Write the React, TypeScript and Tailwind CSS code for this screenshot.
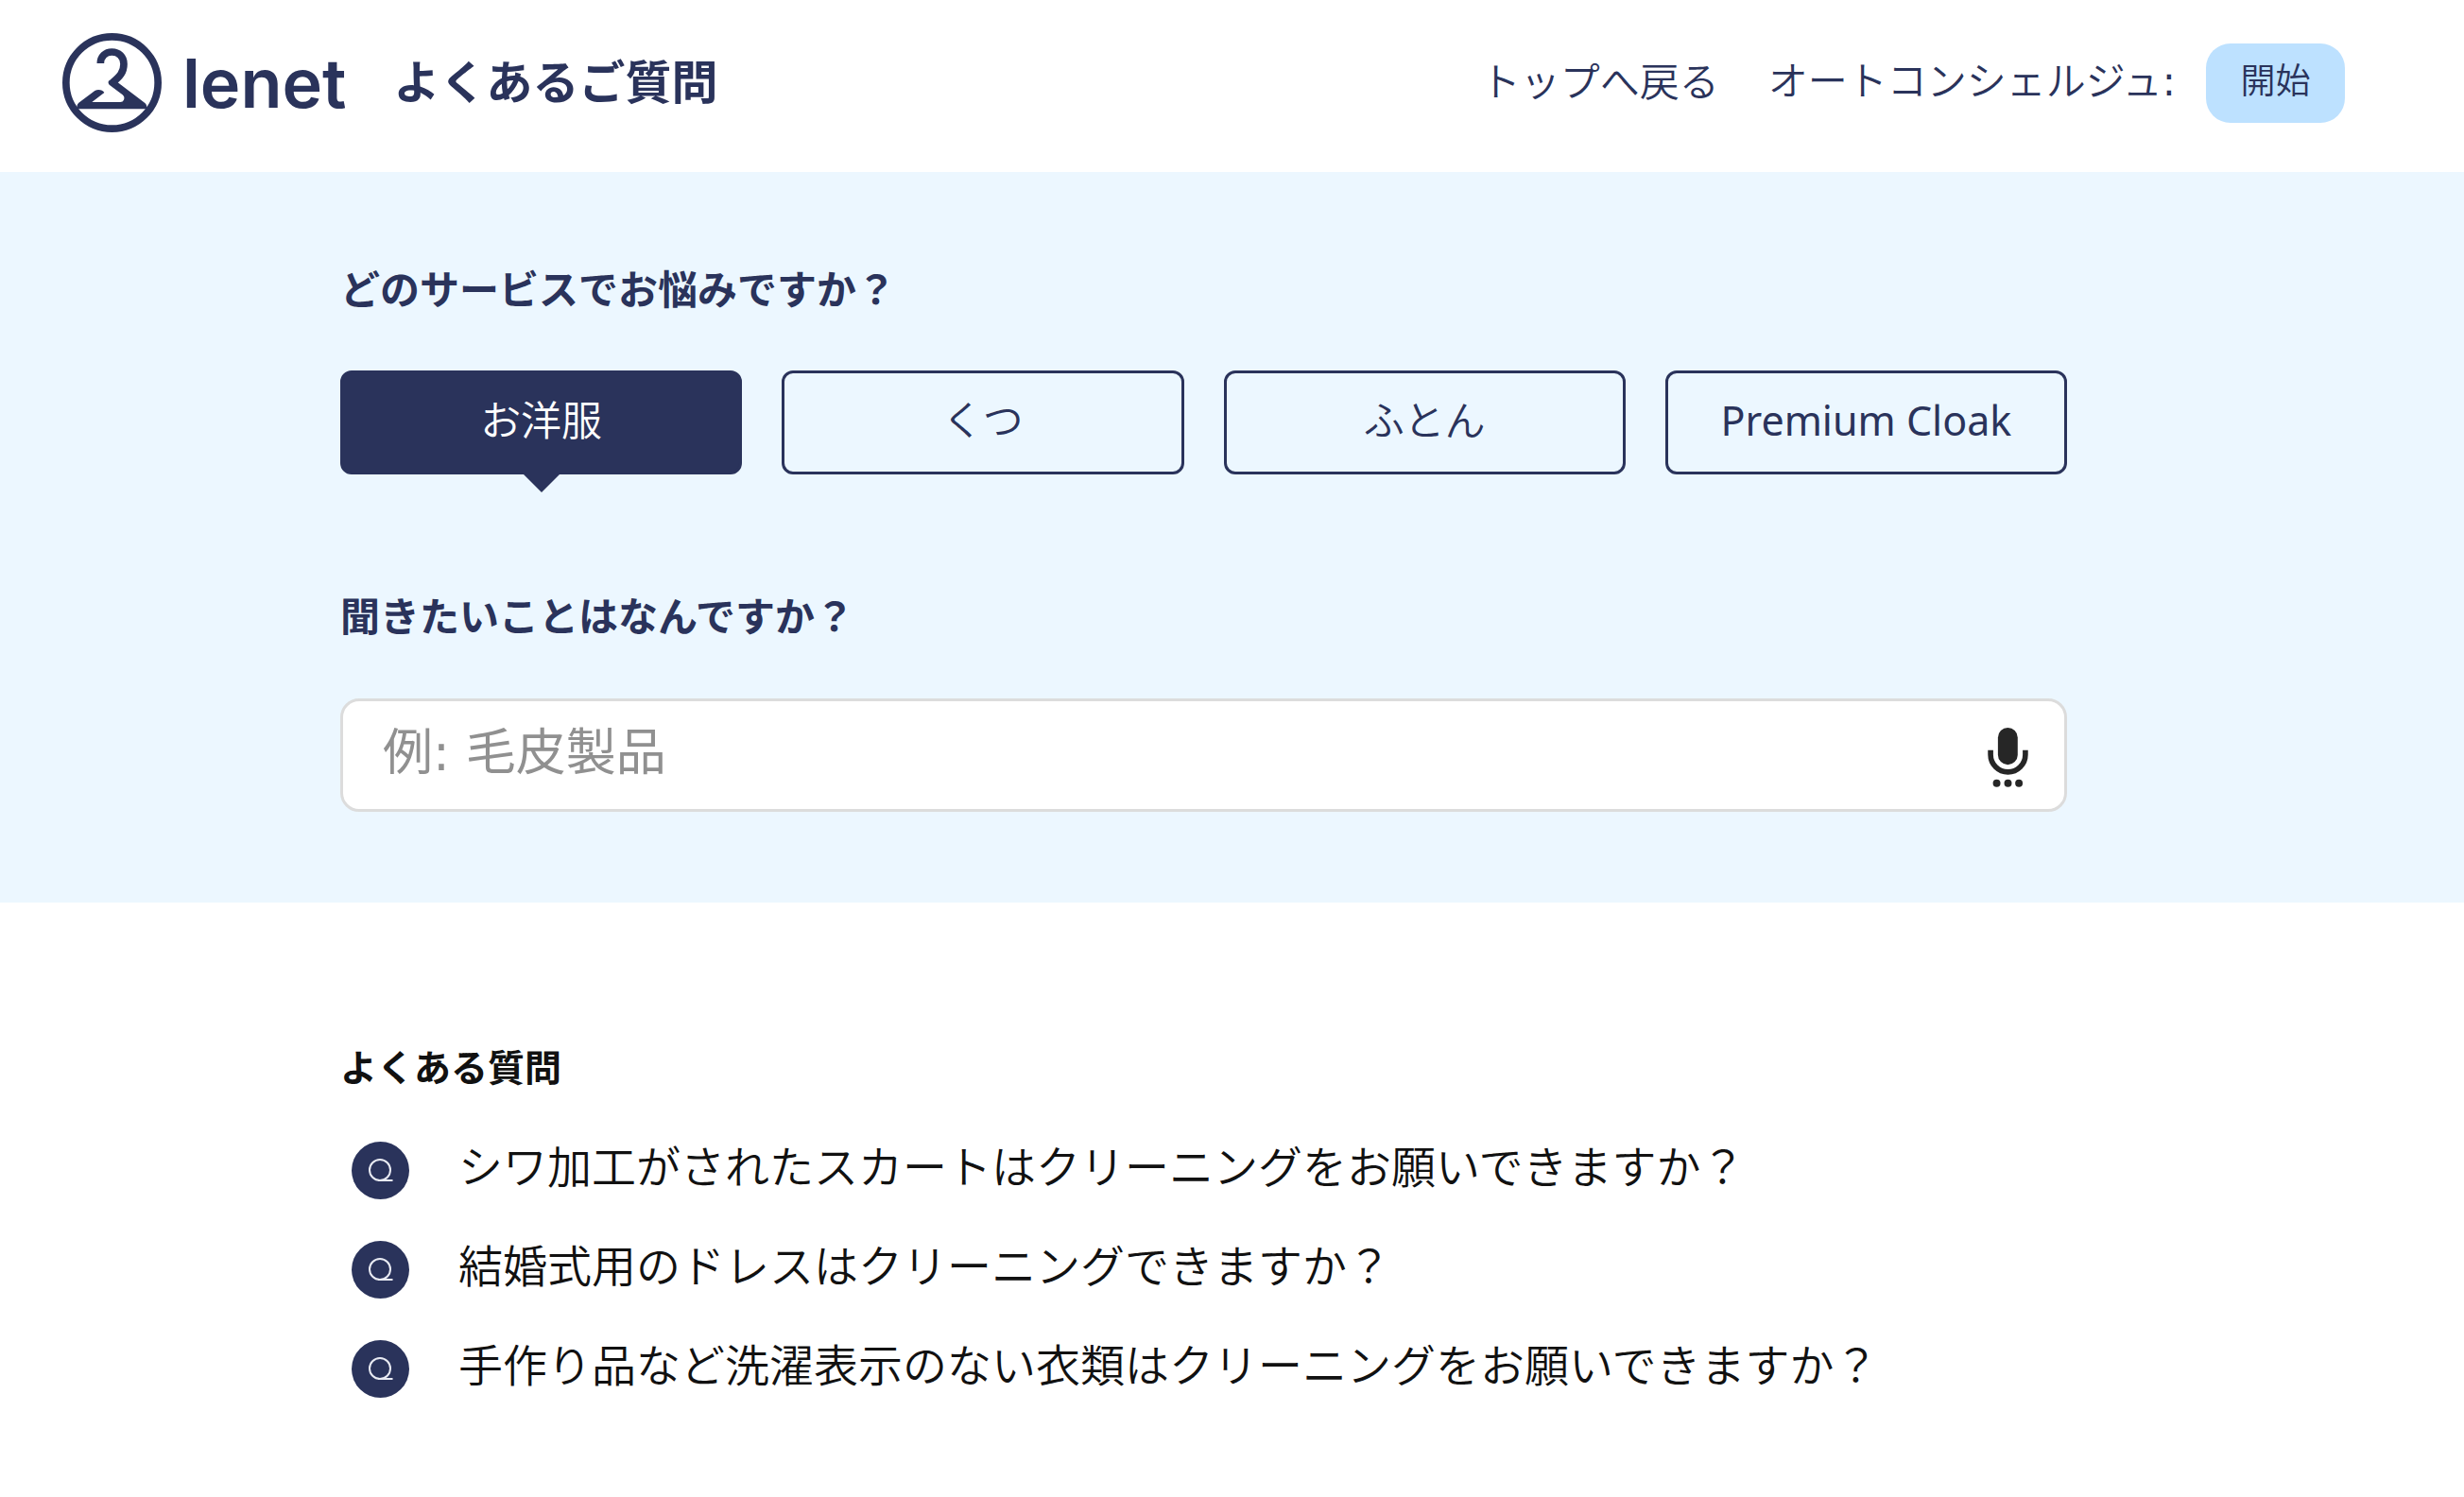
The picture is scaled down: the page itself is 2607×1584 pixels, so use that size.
import { useState } from 'react';
import { clsx } from 'clsx';

const services = [
  { name: 'お洋服', latin: false },
  { name: 'くつ', latin: false },
  { name: 'ふとん', latin: false },
  { name: 'Premium Cloak', latin: true },
];

const questions = [
  'シワ加工がされたスカートはクリーニングをお願いできますか？',
  '結婚式用のドレスはクリーニングできますか？',
  '手作り品など洗濯表示のない衣類はクリーニングをお願いできますか？',
];

function HangerLogo() {
  return (
    <svg viewBox="0 0 315 315" className="size-[105px] shrink-0" fill="none" aria-hidden="true">
      <circle cx="157.500" cy="157.500" r="146" stroke="#2a335b" strokeWidth="23" />
      <path
        d="M121 96 C121 74 137 60 157 60 C179 60 195 75 195 98 C195 124 183 138 158 158"
        stroke="#2a335b"
        strokeWidth="23"
      />
      <path
        d="M167 147 L148 151 Q143 157 149 164 L191 196 Q199 203 195 212 Q192 219 184 219 L94 219 L133 189 C129 181 114 177 103 183 L52 221 Q44 228 47 241 L267 241 Q270 229 262 222 L176 157 Z"
        fill="#2a335b"
      />
    </svg>
  );
}

function MicIcon() {
  return (
    <svg viewBox="0 0 128 190" className="h-[63px] w-[43px]" fill="#262626" aria-hidden="true">
      <rect x="32" y="0" width="63" height="118" rx="31.500" />
      <path d="M8.500 72 V86 A55.500 55.500 0 0 0 119.500 86 V72" fill="none" stroke="#262626" strokeWidth="17" />
      <circle cx="28" cy="177" r="12" />
      <circle cx="64" cy="177" r="12" />
      <circle cx="99" cy="177" r="12" />
    </svg>
  );
}

function QuestionMark() {
  return (
    <svg viewBox="0 0 61 61" className="size-[61px] shrink-0" fill="none" aria-hidden="true">
      <circle cx="30.500" cy="30.500" r="30.500" fill="#2a335b" />
      <circle cx="30" cy="30" r="11" stroke="#e8eaf2" strokeWidth="2" />
      <path d="M28 41 H43.500" stroke="#e8eaf2" strokeWidth="2" />
    </svg>
  );
}

function Header() {
  return (
    <header className="flex h-[182px] items-start justify-between pl-[66px] pr-[126px]">
      <a href="#top" className="flex items-center pt-[35px] text-[#2a335b]">
        <HangerLogo />
        <span className="ml-[22px] font-['Inter'] text-[72px] font-semibold leading-[105px]">lenet</span>
        <span className="ml-[50px] pb-1 text-[49px] font-bold leading-[100px]">よくあるご質問</span>
      </a>

      <nav className="flex items-center pt-[46px] text-[42px] text-[#2a335b]">
        <a href="#top" className="pb-1.5">トップへ戻る</a>
        <span className="ml-[52px] pb-1.5">
          オートコンシェルジュ<span className="font-['DejaVu_Sans'] font-normal">:</span>
        </span>
        <button type="button" className="ml-8 h-[84px] w-[147px] rounded-[26px] bg-[#bde1ff] pb-1.5 text-[37px]">
          開始
        </button>
      </nav>
    </header>
  );
}

export default function App() {
  const [active, setActive] = useState(0);

  return (
    <div id="top" className="min-h-screen bg-white font-['Noto_Sans','Noto_Sans_CJK_JP',sans-serif] font-[350] text-[#111111]">
      <Header />

      <main>
        <section className="bg-[#ecf7ff] pr-[60px]">
          <div className="mx-auto max-w-[1827px] pt-[94px] pb-24 text-[#2a335b]">
            <h2 className="text-[42px] font-bold leading-[60px]">どのサービスでお悩みですか？</h2>
            <div className="mt-14 grid grid-cols-4 gap-[42px]">
              {services.map((service, i) => (
                <button
                  key={service.name}
                  type="button"
                  onClick={() => setActive(i)}
                  className={clsx(
                    'relative h-[110px] rounded-xl border-3 border-[#2a335b] pb-1 text-[43px]',
                    service.latin && 'font-normal',
                    active === i && 'bg-[#2a335b] text-white',
                  )}
                >
                  {service.name}
                  {active === i && (
                    <span className="absolute left-1/2 top-full -translate-x-1/2 border-x-[22px] border-t-[22px] border-x-transparent border-t-[#2a335b]" />
                  )}
                </button>
              ))}
            </div>

            <h2 className="mt-[120px] text-[42px] font-bold leading-[60px]">
              <label htmlFor="keyword">聞きたいことはなんですか？</label>
            </h2>
            <div className="mt-[57px] flex h-[120px] items-center rounded-[20px] border-3 border-[#dcdcdc] bg-white pl-[42px] pr-[38px]">
              <input
                id="keyword"
                type="text"
                placeholder="例: 毛皮製品"
                className="h-full min-w-0 flex-1 bg-transparent pb-1.5 font-['DejaVu_Sans','Noto_Sans_CJK_JP',sans-serif] text-[53px] font-normal outline-none placeholder:text-[#909090]"
              />
              <button type="button" aria-label="音声入力" className="pt-1">
                <MicIcon />
              </button>
            </div>
          </div>
        </section>

        <section className="pr-[60px]">
          <div className="mx-auto max-w-[1827px] pt-36">
            <h2 className="text-[39px] font-bold leading-[60px]">よくある質問</h2>
            <ul className="mt-[49px] flex flex-col gap-11 pl-3">
              {questions.map((question) => (
                <li key={question}>
                  <a href="#faq" className="flex items-center gap-[52px] text-[47px] leading-[53px]">
                    <QuestionMark />
                    <span className="pb-2">{question}</span>
                  </a>
                </li>
              ))}
            </ul>
          </div>
        </section>
      </main>
    </div>
  );
}
